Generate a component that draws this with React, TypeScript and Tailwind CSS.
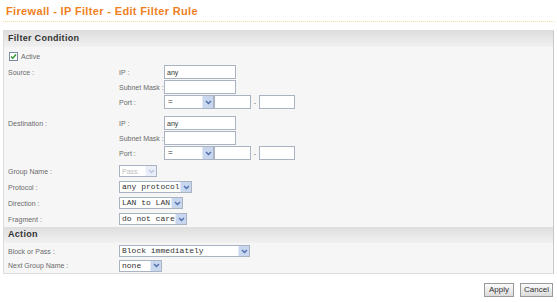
import React from 'react'

const label = "text-[7px] text-[#6b6b6b] leading-none whitespace-nowrap"

function Arrow() {
  return (
    <div className="w-[11px] h-full bg-[#c9d7ee] flex items-center justify-center border-l border-[#e4ebf6]">
      <svg width="7" height="5" viewBox="0 0 7 5">
        <path d="M1 1 L3.5 3.5 L6 1" fill="none" stroke="#4d6fae" strokeWidth="1.4" />
      </svg>
    </div>
  )
}

function Select({ value, width, mono = true, disabled = false }: { value: string; width: string; mono?: boolean; disabled?: boolean }) {
  return (
    <div className={`${width} h-[12px] flex items-stretch border border-[#a9b3c2] bg-white`}>
      <div className={`flex-1 flex items-center pl-[2px] leading-none whitespace-nowrap overflow-hidden ${mono ? "font-['Liberation_Mono'] text-[8px]" : 'text-[7px]'} ${disabled ? 'text-[#bbb]' : 'text-[#333]'}`}>
        {value}
      </div>
      <div className={disabled ? 'opacity-40 h-full' : 'h-full'}><Arrow /></div>
    </div>
  )
}

function Input({ value = '', width }: { value?: string; width: string }) {
  return (
    <div className={`${width} h-[14px] border border-[#a9b3c2] bg-white flex items-center pl-[2px] text-[7px] text-[#333] leading-none`}>
      {value}
    </div>
  )
}

function Header({ title }: { title: string }) {
  return (
    <div className="h-[16px] bg-gradient-to-b from-[#dedede] to-[#f1f1f1] flex items-center pl-[4px] text-[9px] font-bold text-[#333] tracking-[0.3px]">
      {title}
    </div>
  )
}

function AddressBlock({ name }: { name: string }) {
  return (
    <div className="flex">
      <div className={`w-[111px] pt-[4px] ${label}`}>{name}</div>
      <div className="flex flex-col gap-[1px]">
        <div className="flex items-center">
          <div className={`w-[45px] ${label}`}>IP :</div>
          <Input value="any" width="w-[72px]" />
        </div>
        <div className="flex items-center">
          <div className={`w-[45px] ${label}`}>Subnet Mask :</div>
          <Input width="w-[72px]" />
        </div>
        <div className="flex items-center">
          <div className={`w-[45px] ${label}`}>Port :</div>
          <div className="w-[50px] h-[14px] flex items-stretch border border-[#a9b3c2] bg-white">
            <div className="flex-1 flex items-center pl-[3px] text-[8px] text-[#333] leading-none">=</div>
            <Arrow />
          </div>
          <Input width="w-[37px]" />
          <div className={`w-[8px] text-center ${label}`}>-</div>
          <Input width="w-[36px]" />
        </div>
      </div>
    </div>
  )
}

function Row({ name, children, h = 'h-[16px]' }: { name: string; children: React.ReactNode; h?: string }) {
  return (
    <div className={`flex items-center ${h}`}>
      <div className={`w-[111px] ${label}`}>{name}</div>
      {children}
    </div>
  )
}

export default function App() {
  return (
    <div className="w-[557px] h-[302px] bg-white font-['Liberation_Sans'] overflow-hidden">
      <div className="pl-[6px] pt-[6px] h-[21px] text-[11px] font-bold text-[#ef7f1f] leading-none tracking-[0.35px]">
        Firewall - IP Filter - Edit Filter Rule
      </div>
      <div className="mx-[3px] border-t border-dotted border-[#f2dc9c]" />
      <div className="mt-[8px] mx-[3px] w-[551px] border border-[#dcdcdc] border-r-[#c8c8c8] bg-[#f6f6f6]">
        <Header title="Filter Condition" />
        <div className="pl-[4px]">
          <div className="h-[17px] flex items-center gap-[3px] pl-[1px] pt-[1px]">
            <div className="w-[9px] h-[9px] border border-[#7a8ca3] bg-white flex items-center justify-center">
              <svg width="7" height="7" viewBox="0 0 7 7">
                <path d="M1 3.5 L2.8 5.3 L6 1.5" fill="none" stroke="#2f9a2f" strokeWidth="1.4" />
              </svg>
            </div>
            <span className={label}>Active</span>
          </div>
          <div className="pt-[1px]">
            <AddressBlock name="Source :" />
          </div>
          <div className="pt-[7px]">
            <AddressBlock name="Destination :" />
          </div>
          <div className="pt-[3px]">
            <Row name="Group Name :">
              <Select value="Pass" width="w-[38px]" mono={false} disabled />
            </Row>
            <Row name="Protocol :">
              <Select value="any protocol" width="w-[73px]" />
            </Row>
            <Row name="Direction :">
              <Select value="LAN to LAN" width="w-[64px]" />
            </Row>
            <Row name="Fragment :">
              <Select value="do not care" width="w-[68px]" />
            </Row>
          </div>
        </div>
        <Header title="Action" />
        <div className="pl-[4px] pt-[1px]">
          <Row name="Block or Pass :" h="h-[14px]">
            <Select value="Block immediately" width="w-[131px]" />
          </Row>
          <Row name="Next Group Name :" h="h-[15px]">
            <Select value="none" width="w-[43px]" />
          </Row>
        </div>
      </div>
      <div className="flex justify-end gap-[6px] pr-[4px] pt-[9px]">
        <button className="w-[30px] h-[14px] border border-[#9a9a9a] bg-gradient-to-b from-[#fbfbfb] to-[#dcdcdc] text-[8px] text-[#333] leading-none">Apply</button>
        <button className="w-[33px] h-[14px] border border-[#9a9a9a] bg-gradient-to-b from-[#fbfbfb] to-[#dcdcdc] text-[8px] text-[#333] leading-none">Cancel</button>
      </div>
    </div>
  )
}
